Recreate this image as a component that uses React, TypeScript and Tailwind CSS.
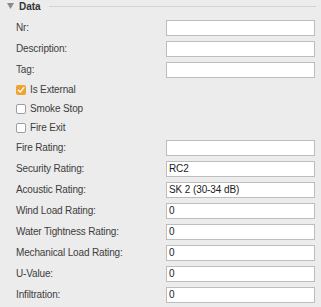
import React from 'react';

const font = { fontFamily: '"Liberation Sans", Arial, sans-serif' };

const topFields = [
  { label: 'Nr:', value: '' },
  { label: 'Description:', value: '' },
  { label: 'Tag:', value: '' },
];

const checks = [
  { label: 'Is External', checked: true },
  { label: 'Smoke Stop', checked: false },
  { label: 'Fire Exit', checked: false },
];

const bottomFields = [
  { label: 'Fire Rating:', value: '' },
  { label: 'Security Rating:', value: 'RC2' },
  { label: 'Acoustic Rating:', value: 'SK 2 (30-34 dB)' },
  { label: 'Wind Load Rating:', value: '0' },
  { label: 'Water Tightness Rating:', value: '0' },
  { label: 'Mechanical Load Rating:', value: '0' },
  { label: 'U-Value:', value: '0' },
  { label: 'Infiltration:', value: '0' },
];

const FieldRow = ({ label, value }: { label: string; value: string }) => (
  <div className="flex h-[21px] items-center">
    <span className="w-[150px] text-[10px] tracking-[-0.15px] text-[#3d3d3d]">{label}</span>
    <input
      readOnly
      value={value}
      className="h-[16px] w-[149px] border border-[#bdbdbd] bg-white px-[2px] text-[10px] tracking-[-0.1px] text-[#1a1a1a] outline-none"
    />
  </div>
);

const CheckRow = ({ label, checked }: { label: string; checked: boolean }) => (
  <div className="flex h-[19px] items-center gap-[4px]">
    {checked ? (
      <span className="flex h-[10px] w-[10px] items-center justify-center rounded-[2px] bg-[#f0a330]">
        <svg width="8" height="8" viewBox="0 0 8 8">
          <path d="M1.3 4.2 L3.2 6.1 L6.8 1.6" fill="none" stroke="white" strokeWidth="1.4" strokeLinecap="round" strokeLinejoin="round" />
        </svg>
      </span>
    ) : (
      <span className="h-[10px] w-[10px] rounded-[2px] border border-[#9e9e9e] bg-white" />
    )}
    <span className="text-[10px] tracking-[-0.15px] text-[#3d3d3d]">{label}</span>
  </div>
);

export default function App() {
  return (
    <div className="h-[307px] w-[321px] bg-[#ececec] pl-[16px]" style={font}>
      <div className="-ml-[9px] flex h-[12px] items-center">
        <svg width="7" height="6" viewBox="0 0 7 6" className="mr-[5px]">
          <path d="M0 0 H7 L3.5 6 Z" fill="#8a8a8a" />
        </svg>
        <span className="text-[10px] font-bold text-[#333]">Data</span>
        <div className="ml-[8px] h-px w-[267px] bg-[#d2d2d2]" />
      </div>
      <div className="mt-[5px]">
        {topFields.map((f) => (
          <FieldRow key={f.label} {...f} />
        ))}
        {checks.map((c) => (
          <CheckRow key={c.label} {...c} />
        ))}
        {bottomFields.map((f) => (
          <FieldRow key={f.label} {...f} />
        ))}
      </div>
    </div>
  );
}
